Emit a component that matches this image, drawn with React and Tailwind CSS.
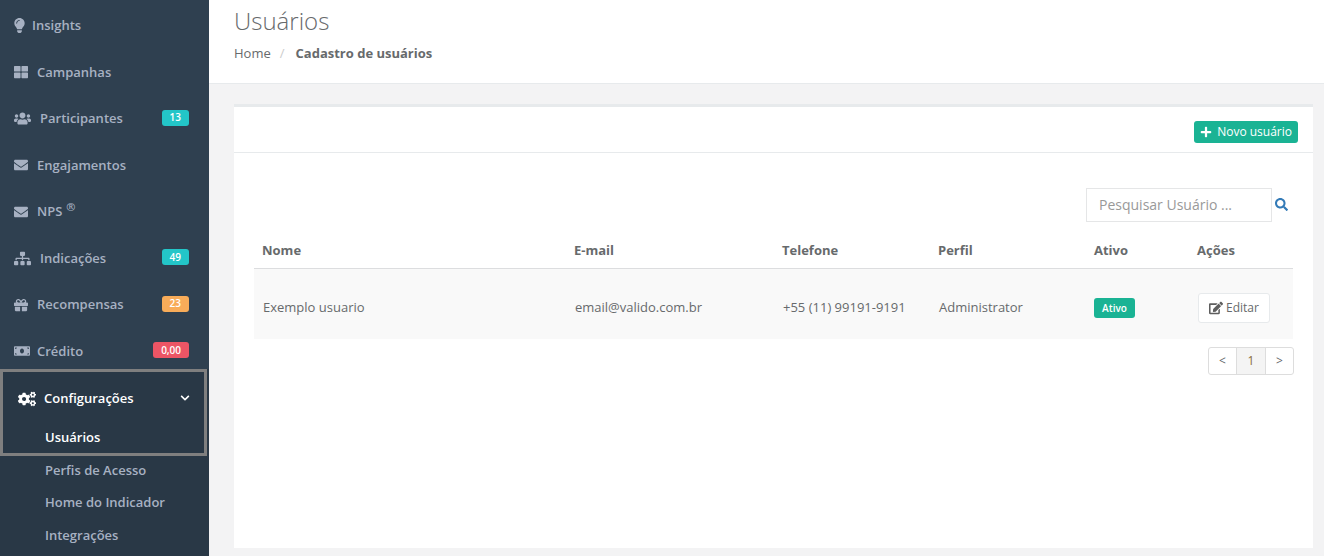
import React from "react";
import { FaLightbulb, FaThLarge, FaUsers, FaEnvelope, FaSitemap, FaGift, FaMoneyBill, FaCogs, FaChevronDown, FaPlus, FaSearch, FaEdit } from "react-icons/fa";

const items = [
  { icon: FaLightbulb, label: "Insights", size: 15, w: 18, shift: "-ml-[2px]" },
  { icon: FaThLarge, label: "Campanhas", size: 14, w: 23 },
  { icon: FaUsers, label: "Participantes", size: 17, w: 26, badge: "13", color: "bg-[#23c6c8]" },
  { icon: FaEnvelope, label: "Engajamentos", size: 14, w: 23 },
  { icon: FaEnvelope, label: "NPS", size: 14, w: 23, sup: true },
  { icon: FaSitemap, label: "Indicações", size: 17, w: 26, badge: "49", color: "bg-[#23c6c8]" },
  { icon: FaGift, label: "Recompensas", size: 14, w: 23, badge: "23", color: "bg-[#f8ac59]" },
  { icon: FaMoneyBill, label: "Crédito", size: 16, w: 23, badge: "0,00", color: "bg-[#ed5565]" },
];

const cols = ["w-[312px]", "w-[208px]", "w-[156px]", "w-[156px]", "w-[103px]", "w-[104px]"];
const heads = ["Nome", "E-mail", "Telefone", "Perfil", "Ativo", "Ações"];

function NavItem({ item }) {
  const Icon = item.icon;
  return (
    <div className="h-[46.5px] flex items-center pl-[14px] pr-[20px] text-[13px] font-semibold text-[#a7b1c2]">
      <span className="flex items-center shrink-0" style={{ width: item.w }}>
        <Icon size={item.size} className={item.shift} />
      </span>
      <span className="relative">
        {item.label}
        {item.sup && <sup className="ml-1 text-[11px] font-semibold">®</sup>}
      </span>
      {item.badge && (
        <span className={`ml-auto h-4 -mt-[2px] px-[8px] min-w-[27px] rounded-[3px] flex items-center justify-center text-[10px] font-semibold text-white ${item.color}`}>
          {item.badge}
        </span>
      )}
    </div>
  );
}

export default function App() {
  return (
    <div className="flex h-[556px] w-[1324px] overflow-hidden bg-[#f3f3f4] font-['Open_Sans',sans-serif] text-[13px] text-[#676a6c]">
      <aside className="w-[209px] shrink-0 bg-[#2f4050] pt-[2.7px]">
        {items.map((it) => <NavItem key={it.label} item={it} />)}
        <div className="bg-[#293846] h-[190px] mt-[-5.7px]">
          <div className="h-[87px] border-[3px] border-[#7f7f7f] mr-[2px]">
            <div className="h-[52px] pt-[1px] flex items-center pl-[15px] pr-[14px] text-white font-semibold">
              <FaCogs size={18} className="shrink-0" />
              <span className="ml-[8px]">Configurações</span>
              <FaChevronDown size={10} className="ml-auto mb-[2px]" />
            </div>
            <div className="h-[26px] pt-[1px] pl-[42px] flex items-center text-white font-semibold">Usuários</div>
          </div>
          <div className="pl-[45px] h-[32.5px] mt-[-2px] flex items-center font-semibold text-[#a7b1c2]">Perfis de Acesso</div>
          <div className="pl-[45px] h-[32.5px] flex items-center font-semibold text-[#a7b1c2]">Home do Indicador</div>
          <div className="pl-[45px] h-[32.5px] flex items-center font-semibold text-[#a7b1c2]">Integrações</div>
        </div>
      </aside>

      <main className="flex-1 min-w-0">
        <header className="h-[84px] bg-white border-b border-[#e7eaec] pl-[25px]">
          <h2 className="text-[24px] font-light leading-[26px] pt-[8px] h-[37px] box-content">Usuários</h2>
          <div className="flex items-center h-[18px] mt-0">
            <span>Home</span>
            <span className="ml-[9px] text-[#ccc]">/</span>
            <span className="ml-[11px] font-bold">Cadastro de usuários</span>
          </div>
        </header>

        <section className="ml-[25px] mr-[11px] mt-[20px] h-[444px] bg-white border-t-[3px] border-[#e7eaec]">
          <div className="h-[46px] border-b border-[#e7eaec] flex items-start justify-end pr-[15px] pt-[14px]">
            <button className="h-[22px] px-[6px] rounded-[3px] bg-[#1ab394] text-white text-[12px] flex items-center gap-[5px]">
              <FaPlus size={12} />
              Novo usuário
            </button>
          </div>

          <div className="pl-[20px] pr-[20px]">
            <div className="flex items-center justify-end mt-[35px] pr-[5px]">
              <div className="w-[186px] h-[34px] border border-[#e5e6e7] pl-[12px] pb-[2px] flex items-center text-[14px] text-[#999]">Pesquisar Usuário ...</div>
              <FaSearch size={13} className="ml-[3px] mb-[1px] text-[#337ab7]" />
            </div>

            <table className="w-[1039px] table-fixed mt-[11px] border-collapse">
              <thead>
                <tr className="h-[35px] border-b border-[#dcdddf]">
                  {heads.map((h, i) => (
                    <th key={h} className={`${cols[i]} text-left font-bold pl-[8px]`}>{h}</th>
                  ))}
                </tr>
              </thead>
              <tbody>
                <tr className="h-[71px] bg-[#f9f9f9]">
                  <td className="pl-[9px] pt-[8px]">Exemplo usuario</td>
                  <td className="pl-[9px] pt-[8px]">email@valido.com.br</td>
                  <td className="pl-[9px] pt-[8px]">+55 (11) 99191-9191</td>
                  <td className="pl-[9px] pt-[8px]">Administrator</td>
                  <td className="pl-[8px] pt-[8px]">
                    <span className="inline-flex h-5 w-[41px] items-center justify-center rounded-[3px] bg-[#1ab394] text-white text-[10px] font-semibold">Ativo</span>
                  </td>
                  <td className="pl-[9px] pt-[8px]">
                    <span className="inline-flex h-[30px] w-[72px] items-center justify-center gap-[3px] rounded-[3px] bg-white border border-[#e7eaec] text-[12px]">
                      <FaEdit size={14} className="text-[#5e5e5e]" />
                      Editar
                    </span>
                  </td>
                </tr>
              </tbody>
            </table>

            <div className="flex justify-end mt-[8px] mr-[-1px]">
              <div className="flex h-[28px] rounded-[3px] border border-[#dddddd] text-[12px] bg-white">
                <span className="w-[27px] flex items-center justify-center">&lt;</span>
                <span className="w-[30px] flex items-center justify-center bg-[#f4f4f4] border-x border-[#dddddd] text-[#8a6d3b]">1</span>
                <span className="w-[27px] flex items-center justify-center">&gt;</span>
              </div>
            </div>
          </div>
        </section>
      </main>
    </div>
  );
}
